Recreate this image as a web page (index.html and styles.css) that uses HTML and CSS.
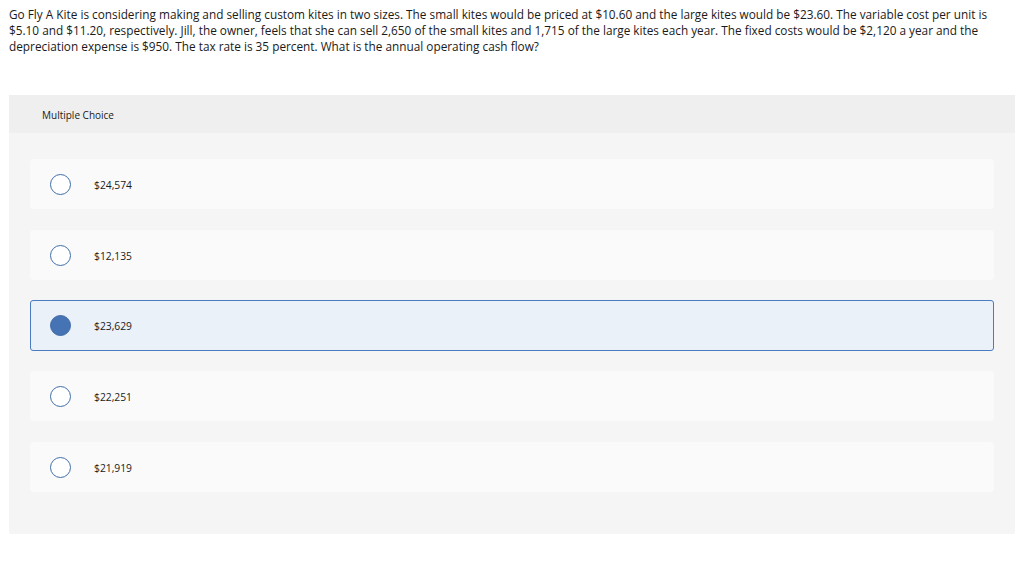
FILE: index.html
```html
<!DOCTYPE html>
<html>
<head>
<meta charset="utf-8">
<link rel="stylesheet" href="styles.css">
</head>
<body>
<p class="question">Go Fly A Kite is considering making and selling custom kites in two sizes. The small kites would be priced at $10.60 and the large kites would be $23.60. The variable cost per unit is<br>$5.10 and $11.20, respectively. Jill, the owner, feels that she can sell 2,650 of the small kites and 1,715 of the large kites each year. The fixed costs would be $2,120 a year and the<br>depreciation expense is $950. The tax rate is 35 percent. What is the annual operating cash flow?</p>
<div class="panel">
  <div class="panel-head">Multiple Choice</div>
  <div class="options">
    <div class="option"><span class="radio"></span><span class="label">$24,574</span></div>
    <div class="option"><span class="radio"></span><span class="label">$12,135</span></div>
    <div class="option selected"><span class="radio"></span><span class="label">$23,629</span></div>
    <div class="option"><span class="radio"></span><span class="label">$22,251</span></div>
    <div class="option"><span class="radio"></span><span class="label">$21,919</span></div>
  </div>
</div>
</body>
</html>
```
FILE: styles.css
```css
body {
  margin: 0;
  padding: 6px 9px 0 9px;
  font-family: "Open Sans", "Liberation Sans", sans-serif;
  color: #1a1a1a;
  background: #fff;
}
.question {
  margin: 0;
  font-size: 11.8px;
  line-height: 16px;
  white-space: nowrap;
}
.panel {
  margin-top: 41px;
  background: #f5f5f5;
  border-radius: 2px;
  padding-bottom: 42px;
}
.panel-head {
  background: #efefef;
  height: 38px;
  display: flex;
  align-items: center;
  padding-left: 33px;
  padding-top: 2px;
  box-sizing: border-box;
  font-size: 10px;
}
.options {
  display: flex;
  flex-direction: column;
  gap: 21px;
  padding: 26px 21px 0 21px;
}
.option {
  height: 50px;
  background: #fafafa;
  border: 1px solid #fafafa;
  border-radius: 3px;
  display: flex;
  align-items: center;
  box-sizing: border-box;
  padding-left: 19px;
  padding-top: 2px;
  font-size: 10.3px;
}
.option .radio {
  margin-top: -2px;
}
.option.selected {
  background: #eaf1f9;
  border-color: #4b7cc0;
  height: 51px;
  padding-top: 0;
  margin: -1px 0;
}
.option.selected .radio {
  margin-top: 0;
}
.radio {
  width: 21px;
  height: 21px;
  box-sizing: border-box;
  border: 1px solid #3f6fa8;
  border-radius: 50%;
  background: #fff;
  flex: none;
}
.selected .radio {
  background: #4673b3;
  border-color: #3f6aa6;
}
.label {
  margin-left: 23px;
}
```
